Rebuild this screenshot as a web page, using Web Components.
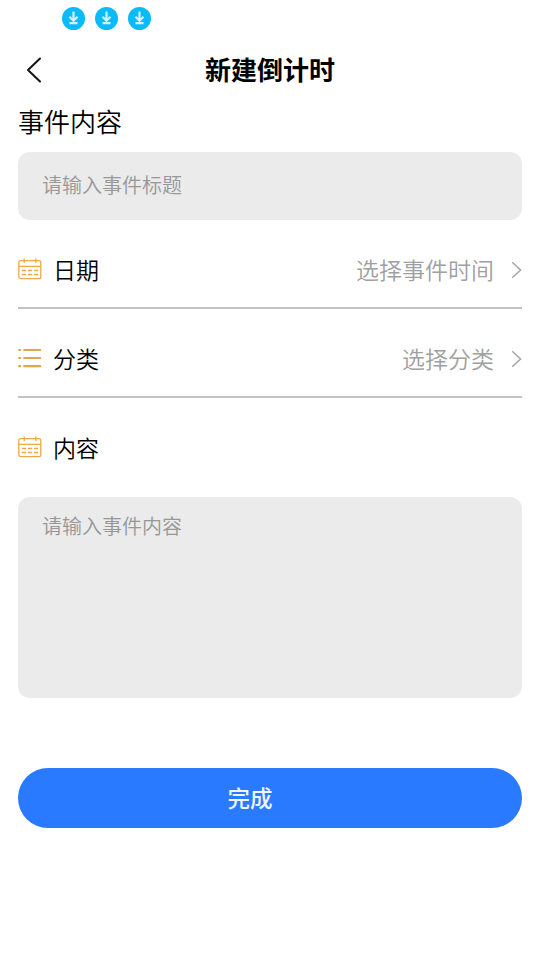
<!DOCTYPE html>
<html lang="zh-CN">
<head>
<meta charset="utf-8">
<title>新建倒计时</title>
<style>
html, body { margin: 0; background: #fff; }
body { width: 540px; height: 960px; overflow: hidden; font-family: "Noto Sans CJK SC", sans-serif; color: #000; }
</style>
</head>
<body>
<countdown-page></countdown-page>
<script>
const define = (name, markup) => {
  const template = document.createElement('template');
  template.innerHTML = markup;
  customElements.define(name, class extends HTMLElement {
    constructor() {
      super();
      this.attachShadow({ mode: 'open' }).append(template.content.cloneNode(true));
    }
  });
};

define('download-badge', `
<style>:host{display:block;width:23px;height:23px} svg{display:block}</style>
<svg width="23" height="23" viewBox="0 0 23 23" fill="none">
  <circle cx="11.5" cy="11.5" r="11.5" fill="#0abbfa"/>
  <path d="M11.5 4.5v9M7.5 9.8l4 3.9 4-3.9M7.5 16.2h8" stroke="#d0f3ff" stroke-width="2.2"/>
</svg>`);

define('status-bar', `
<style>:host{display:flex;gap:10px;height:37px;padding:7px 0 0 62px;box-sizing:border-box}</style>
<download-badge></download-badge><download-badge></download-badge><download-badge></download-badge>`);

define('nav-bar', `
<style>
:host{display:grid;grid-template-columns:60px 1fr 60px;align-items:center;height:66px}
svg{display:block;margin-left:26px}
h1{margin:0;padding-bottom:2px;text-align:center;font-size:26px;line-height:38px;font-weight:700}
</style>
<svg width="16" height="26" viewBox="0 0 16 26" fill="none" stroke="#151515" stroke-width="2" stroke-linecap="round" stroke-linejoin="round"><path d="M14 1.5 2 13l12 11.5"/></svg>
<h1><slot></slot></h1>`);

define('calendar-icon', `
<style>:host{display:block;width:24px;height:22px} svg{display:block}</style>
<svg width="24" height="22" viewBox="0 0 24 22" fill="none" stroke="#eda945" stroke-width="1.3">
  <rect x=".8" y="2.6" width="22" height="18.1" rx="2"/>
  <path d="M1 8.4h22M6.2.5v4.4M17.8.5v4.4"/>
  <path d="M3.8 12.5h4.4M10 12.5h4.2M16 12.5h4.2M3.8 16.5h4.4M10 16.5h4.2M16 16.5h4.2"/>
</svg>`);

define('list-icon', `
<style>:host{display:block;width:24px;height:22px} svg{display:block}</style>
<svg width="24" height="22" viewBox="0 0 24 22" fill="none" stroke="#e2a848" stroke-width="2.2" stroke-linecap="round">
  <path d="M6.2 3h16M6.2 11h16M6.2 19.2h16"/><path stroke-linecap="butt" d="M.3 3h2.6M.3 11h2.6M.3 19.2h2.6"/>
</svg>`);

define('form-row', `
<style>
:host{display:flex;align-items:center;height:89px;padding-top:10px;box-sizing:border-box;border-bottom:2px solid #c3c3c3;font-size:23px;line-height:34px}
:host([plain]){border-color:transparent}
.label{margin-left:11px;font-weight:350}
.value{margin-left:auto;color:#a0a0a0;font-weight:350}
svg{display:block;margin:3px 0 0 17px}
:host([plain]) svg{display:none}
</style>
<slot name="icon"></slot><span class="label"><slot></slot></span>
<span class="value"><slot name="value"></slot></span>
<svg width="11" height="18" viewBox="0 0 11 18" fill="none" stroke="#a5a5a5" stroke-width="1.5"><path d="M1.2 1.2 9.6 9l-8.4 7.8"/></svg>`);

define('text-field', `
<style>
:host{display:block;height:68px;padding:18px 24px;box-sizing:border-box;border-radius:12px;background:#ebebeb;color:#979797;font-size:20px;line-height:30px;font-weight:350}
:host([multiline]){height:201px;padding-top:14px}
</style><slot></slot>`);

define('submit-button', `
<style>
:host{display:block}
button{display:block;width:100%;height:60px;border:0;border-radius:30px;background:#297aff;color:#eef5ff;font:500 22.5px/34px "Noto Sans CJK SC",sans-serif;padding:0 40px 3px 0}
</style><button type="button"><slot></slot></button>`);

define('countdown-page', `
<style>
:host{display:block}
main{padding:0 18px}
h2{margin:0;height:49px;font-size:26px;line-height:36px;font-weight:350}
.notes{margin-top:10px}
submit-button{margin-top:70px}
</style>
<status-bar></status-bar>
<nav-bar>新建倒计时</nav-bar>
<main>
  <h2>事件内容</h2>
  <text-field>请输入事件标题</text-field>
  <form-row><calendar-icon slot="icon"></calendar-icon>日期<span slot="value">选择事件时间</span></form-row>
  <form-row><list-icon slot="icon"></list-icon>分类<span slot="value">选择分类</span></form-row>
  <form-row plain><calendar-icon slot="icon"></calendar-icon>内容</form-row>
  <text-field class="notes" multiline>请输入事件内容</text-field>
  <submit-button>完成</submit-button>
</main>`);
</script>
</body>
</html>
